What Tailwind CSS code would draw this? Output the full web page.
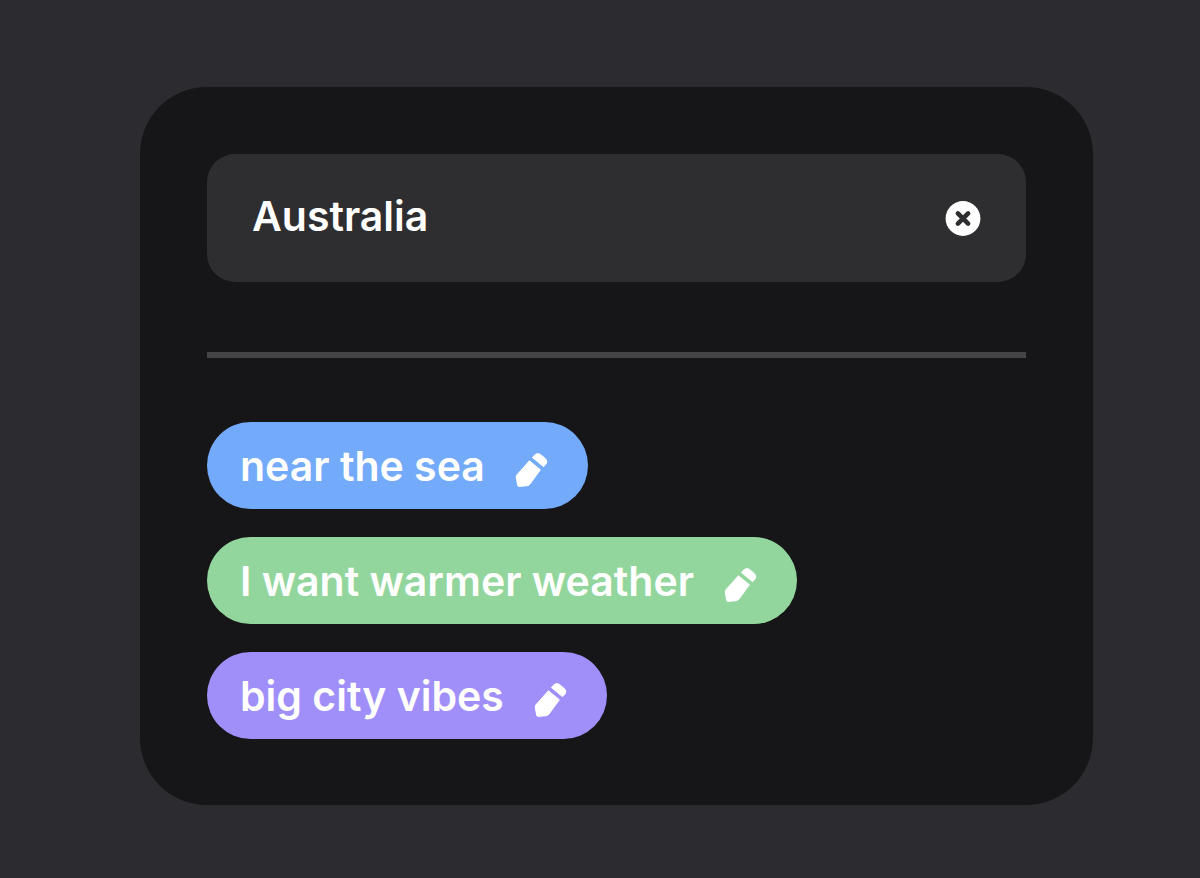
<!DOCTYPE html>
<html lang="en">
<head>
    <meta charset="UTF-8">
    <meta name="viewport" content="width=device-width, initial-scale=1.0">
    <title>Destination notes</title>
    <script src="https://cdn.jsdelivr.net/npm/@tailwindcss/browser@4"></script>
</head>
<body class="min-h-screen bg-[#2c2b30] pt-[87px] pb-[73px] pl-[140px] pr-[107px] font-['Inter','Liberation_Sans',sans-serif] text-white">
    <!-- Shared pencil icon -->
    <svg class="hidden" aria-hidden="true">
        <symbol id="pencil" viewBox="0 0 33 36">
            <g fill="currentColor" stroke="currentColor" stroke-width="1" stroke-linejoin="round">
                <path d="M14.4 8.8 25.4 17.8 15 32Q13.9 33.5 12.2 33.7L4 34.4Q2.9 34.4 2.7 33.3L1.2 25.2Q1.1 23.7 2 22.7Z"/>
                <path d="M17.4 5.4 20 2.8Q22.6.4 25.4 2.4L30.4 6.6Q32.8 9.2 31.2 11.8L28.6 14.7Z"/>
            </g>
        </symbol>
    </svg>

    <main class="rounded-[67px] bg-[#161618] px-[67px] pt-[67px] pb-[66px]">
        <form class="flex h-32 items-center rounded-[28px] bg-[#2e2e30] px-[45px]">
            <input type="text" value="Australia" aria-label="Destination" class="min-w-0 flex-1 bg-transparent pb-1 text-[41px] leading-[56px] font-semibold outline-none">
            <button type="reset" aria-label="Clear destination">
                <svg class="size-9" viewBox="0 0 36 36" aria-hidden="true">
                    <circle cx="18" cy="18.5" r="17.4" fill="#fff"/>
                    <path d="M12.9 13.4 23.1 23.6M23.1 13.4 12.9 23.6" stroke="#2e2e30" stroke-width="4.6" stroke-linecap="round"/>
                </svg>
            </button>
        </form>

        <hr class="mt-[70px] mb-16 border-t-6 border-[#454547]">

        <ul class="flex flex-col items-start gap-7">
            <li class="flex h-[87px] items-center gap-[30px] rounded-full bg-[#73aaf9] pl-[33px] pr-10">
                <span class="text-[41px] leading-[56px] font-semibold">near the sea</span>
                <button type="button" aria-label="Edit near the sea" class="pt-2"><svg class="h-9 w-[33px]"><use href="#pencil"/></svg></button>
            </li>
            <li class="flex h-[87px] items-center gap-[30px] rounded-full bg-[#93d69d] pl-[33px] pr-10">
                <span class="text-[41px] leading-[56px] font-semibold">I want warmer weather</span>
                <button type="button" aria-label="Edit I want warmer weather" class="pt-2"><svg class="h-9 w-[33px]"><use href="#pencil"/></svg></button>
            </li>
            <li class="flex h-[87px] items-center gap-[30px] rounded-full bg-[#a08ff8] pl-[33px] pr-10">
                <span class="text-[41px] leading-[56px] font-semibold">big city vibes</span>
                <button type="button" aria-label="Edit big city vibes" class="pt-2"><svg class="h-9 w-[33px]"><use href="#pencil"/></svg></button>
            </li>
        </ul>
    </main>
</body>
</html>
